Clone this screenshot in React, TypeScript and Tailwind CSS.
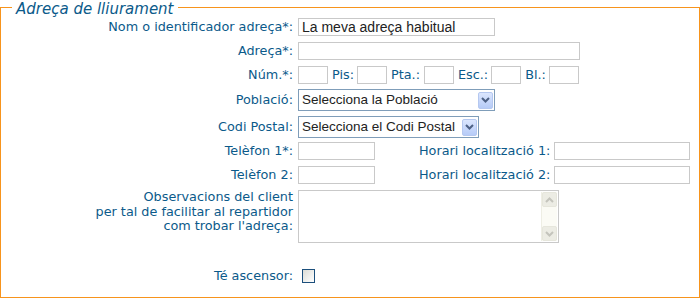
import * as React from 'react';

const lbl = "font-['DejaVu_Sans',Verdana,sans-serif] text-[12.8px] text-[#0b5a8a] whitespace-nowrap";
const fld = "font-['Liberation_Sans',Arial,sans-serif] text-[14px] text-[#222]";
const sel = "font-['Liberation_Sans',Arial,sans-serif] text-[13.5px] text-[#222]";

const Box: React.FC<{ w: string; value?: string }> = ({ w, value }) => (
  <input
    readOnly
    defaultValue={value}
    className={`${w} h-[18px] border border-[#c9c9c9] bg-white px-[3px] outline-none ${fld}`}
  />
);

const Row: React.FC<{ label: string; cls: string; children: React.ReactNode }> = ({ label, cls, children }) => (
  <div className={`flex items-center ${cls}`}>
    <div className={`w-[292px] text-right ${lbl}`}>{label}</div>
    <div className="ml-[5px] flex items-center">{children}</div>
  </div>
);

const Arrow: React.FC = () => (
  <div className="flex h-[17px] w-[15px] shrink-0 items-center justify-center rounded-[2px] border border-[#b5c8f0] bg-gradient-to-b from-[#dbe6fe] to-[#b6cbf7]">
    <svg width="9" height="6" viewBox="0 0 9 6">
      <path d="M1 1 L4.5 4.5 L8 1" fill="none" stroke="#4d6185" strokeWidth="2" />
    </svg>
  </div>
);

const Select: React.FC<{ w: string; text: string }> = ({ w, text }) => (
  <div className={`${w} flex h-[22px] items-center justify-between border border-[#7f9db9] bg-white pl-[3px] pr-[1px] ${sel}`}>
    <span className="whitespace-nowrap">{text}</span>
    <Arrow />
  </div>
);

const Small: React.FC = () => <Box w="w-[30px]" />;

const Scroll: React.FC = () => (
  <div className="flex h-full w-[16px] flex-col justify-between bg-[#fbfbf5] border-l border-[#eeeee4]">
    <div className="flex h-[15px] items-center justify-center rounded-[2px] border border-[#e6e6dc] bg-[#ecece4]">
      <svg width="9" height="6" viewBox="0 0 9 6">
        <path d="M1 5 L4.5 1.5 L8 5" fill="none" stroke="#c4c4bc" strokeWidth="2" />
      </svg>
    </div>
    <div className="flex h-[15px] items-center justify-center rounded-[2px] border border-[#e6e6dc] bg-[#ecece4]">
      <svg width="9" height="6" viewBox="0 0 9 6">
        <path d="M1 1 L4.5 4.5 L8 1" fill="none" stroke="#c4c4bc" strokeWidth="2" />
      </svg>
    </div>
  </div>
);

export default function App() {
  return (
    <div className="h-[299px] w-[700px] bg-white">
      <fieldset className="h-[298px] w-[700px] border border-[#f7941d]">
        <legend className="ml-[11px] px-[4px] font-['DejaVu_Sans',Verdana,sans-serif] text-[15px] italic leading-[14px] text-[#0b5a8a]">
          <span className="relative top-[2px]">Adreça de lliurament</span>
        </legend>
        <Row label="Nom o identificador adreça*:" cls="mt-[4px] h-[18px]">
          <Box w="w-[197px]" value="La meva adreça habitual" />
        </Row>
        <Row label="Adreça*:" cls="mt-[6px] h-[18px]">
          <Box w="w-[282px]" />
        </Row>
        <Row label="Núm.*:" cls="mt-[6px] h-[18px]">
          <Small />
          <span className={`ml-[4px] mr-[3px] ${lbl}`}>Pis:</span>
          <Small />
          <span className={`ml-[4px] mr-[4px] ${lbl}`}>Pta.:</span>
          <Small />
          <span className={`ml-[4px] mr-[3px] ${lbl}`}>Esc.:</span>
          <Small />
          <span className={`ml-[4px] mr-[3px] ${lbl}`}>Bl.:</span>
          <Small />
        </Row>
        <Row label="Població:" cls="mt-[5px] h-[22px]">
          <Select w="w-[197px]" text="Selecciona la Població" />
        </Row>
        <Row label="Codi Postal:" cls="mt-[5px] h-[22px]">
          <Select w="w-[181px]" text="Selecciona el Codi Postal" />
        </Row>
        <Row label="Telèfon 1*:" cls="mt-[4px] h-[18px]">
          <Box w="w-[77px]" />
          <span className={`ml-[44px] mr-[5px] w-[130px] text-right ${lbl}`}>Horari localització 1:</span>
          <Box w="w-[136px]" />
        </Row>
        <Row label="Telèfon 2:" cls="mt-[6px] h-[18px]">
          <Box w="w-[77px]" />
          <span className={`ml-[44px] mr-[5px] w-[130px] text-right ${lbl}`}>Horari localització 2:</span>
          <Box w="w-[136px]" />
        </Row>
        <div className="mt-[6px] flex items-start">
          <div className={`w-[292px] text-right leading-[14.5px] ${lbl}`}>
            Observacions del client
            <br />
            per tal de facilitar al repartidor
            <br />
            com trobar l'adreça:
          </div>
          <div className="ml-[5px] flex h-[53px] w-[261px] justify-end border border-[#c9c9c9] bg-white p-[1px]">
            <Scroll />
          </div>
        </div>
        <div className="mt-[26px] flex h-[14px] items-center">
          <div className={`w-[292px] text-right ${lbl}`}>Té ascensor:</div>
          <span className="ml-[9px] h-[14px] w-[13px] border border-[#1c4f7c] bg-gradient-to-br from-[#dcdcd6] to-[#ffffff]" />
        </div>
      </fieldset>
    </div>
  );
}
